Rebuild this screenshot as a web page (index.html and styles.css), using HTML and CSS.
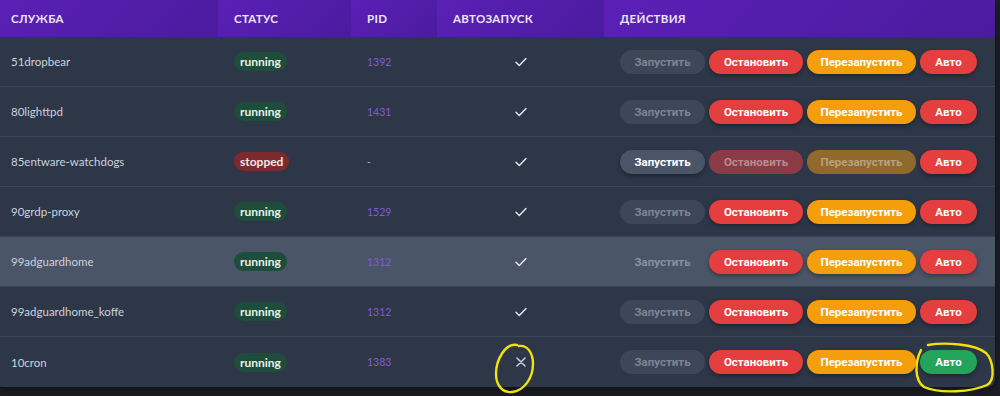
FILE: index.html
```html
<!DOCTYPE html>
<html lang="ru">
<head>
<meta charset="utf-8">
<title>Службы</title>
<link rel="stylesheet" href="styles.css">
</head>
<body>
<div class="wrap">
  <table class="services">
    <colgroup>
      <col class="c-name"><col class="c-status"><col class="c-pid"><col class="c-auto"><col class="c-act">
    </colgroup>
    <thead>
      <tr><th>Служба</th><th>Статус</th><th>PID</th><th>Автозапуск</th><th>Действия</th></tr>
    </thead>
    <tbody>
      <tr>
        <td class="name">51dropbear</td>
        <td><span class="badge run">running</span></td>
        <td class="pid">1392</td>
        <td class="auto"><svg class="ico" width="12" height="10" viewBox="0 0 12 10"><path d="M1 5.2 L4.3 8.4 L11 1.4"/></svg></td>
        <td><div class="actions"><button class="btn start off">Запустить</button><button class="btn stop">Остановить</button><button class="btn restart">Перезапустить</button><button class="btn autob red">Авто</button></div></td>
      </tr>
      <tr>
        <td class="name">80lighttpd</td>
        <td><span class="badge run">running</span></td>
        <td class="pid">1431</td>
        <td class="auto"><svg class="ico" width="12" height="10" viewBox="0 0 12 10"><path d="M1 5.2 L4.3 8.4 L11 1.4"/></svg></td>
        <td><div class="actions"><button class="btn start off">Запустить</button><button class="btn stop">Остановить</button><button class="btn restart">Перезапустить</button><button class="btn autob red">Авто</button></div></td>
      </tr>
      <tr>
        <td class="name">85entware-watchdogs</td>
        <td><span class="badge stop">stopped</span></td>
        <td class="pid dash">-</td>
        <td class="auto"><svg class="ico" width="12" height="10" viewBox="0 0 12 10"><path d="M1 5.2 L4.3 8.4 L11 1.4"/></svg></td>
        <td><div class="actions"><button class="btn start">Запустить</button><button class="btn stop off">Остановить</button><button class="btn restart off">Перезапустить</button><button class="btn autob red">Авто</button></div></td>
      </tr>
      <tr>
        <td class="name">90grdp-proxy</td>
        <td><span class="badge run">running</span></td>
        <td class="pid">1529</td>
        <td class="auto"><svg class="ico" width="12" height="10" viewBox="0 0 12 10"><path d="M1 5.2 L4.3 8.4 L11 1.4"/></svg></td>
        <td><div class="actions"><button class="btn start off">Запустить</button><button class="btn stop">Остановить</button><button class="btn restart">Перезапустить</button><button class="btn autob red">Авто</button></div></td>
      </tr>
      <tr class="hover">
        <td class="name">99adguardhome</td>
        <td><span class="badge run">running</span></td>
        <td class="pid">1312</td>
        <td class="auto"><svg class="ico" width="12" height="10" viewBox="0 0 12 10"><path d="M1 5.2 L4.3 8.4 L11 1.4"/></svg></td>
        <td><div class="actions"><button class="btn start off">Запустить</button><button class="btn stop">Остановить</button><button class="btn restart">Перезапустить</button><button class="btn autob red">Авто</button></div></td>
      </tr>
      <tr>
        <td class="name">99adguardhome_koffe</td>
        <td><span class="badge run">running</span></td>
        <td class="pid">1312</td>
        <td class="auto"><svg class="ico" width="12" height="10" viewBox="0 0 12 10"><path d="M1 5.2 L4.3 8.4 L11 1.4"/></svg></td>
        <td><div class="actions"><button class="btn start off">Запустить</button><button class="btn stop">Остановить</button><button class="btn restart">Перезапустить</button><button class="btn autob red">Авто</button></div></td>
      </tr>
      <tr>
        <td class="name">10cron</td>
        <td><span class="badge run">running</span></td>
        <td class="pid">1383</td>
        <td class="auto"><svg class="ico cross" width="10" height="10" viewBox="0 0 10 10"><path d="M1 1 L9 9 M9 1 L1 9"/></svg></td>
        <td><div class="actions"><button class="btn start off">Запустить</button><button class="btn stop">Остановить</button><button class="btn restart">Перезапустить</button><button class="btn autob green">Авто</button></div></td>
      </tr>
    </tbody>
  </table>
  <svg class="marks" width="1000" height="396" viewBox="0 0 1000 396">
    <path d="M517 345 C505 343 496 360 496 374 C496 386 503 393 512 392 C524 391 533 378 533 364 C533 352 527 345 519 346" />
    <path d="M921 350 C915 362 914 380 924 387 C940 394 972 392 987 385 C996 380 993 360 986 353 C975 344 945 342 928 345" />
  </svg>
</div>
</body>
</html>
```

FILE: styles.css
```css
* { box-sizing: border-box; }
html, body { margin: 0; padding: 0; }
body {
  background: #1b1e25;
  font-family: Lato, "Open Sans", sans-serif;
  width: 1000px;
  height: 396px;
  overflow: hidden;
}
.wrap {
  position: relative;
  width: 1000px;
  height: 396px;
}
.services {
  margin-left: -5px;
  width: 1000px;
  border-collapse: separate;
  border-spacing: 0;
  table-layout: fixed;
  background: #2d3748;
  border-radius: 0 0 8px 8px;
  overflow: hidden;
  box-shadow: 0 3px 8px rgba(0,0,0,0.45);
}
.c-name { width: 223px; }
.c-status { width: 133px; }
.c-pid { width: 86px; }
.c-auto { width: 167px; }
.c-act { width: auto; }

th {
  height: 37px;
  padding: 0 16px;
  text-align: left;
  font-size: 11.5px;
  font-weight: 700;
  letter-spacing: 0.3px;
  text-transform: uppercase;
  color: #ece4f8;
  background: linear-gradient(135deg, #5a20b6 0%, #4b1b9e 100%);
}

td {
  height: 50px;
  padding: 0 16px;
  border-bottom: 1px solid #3b4556;
  font-size: 11.5px;
  color: #cdd5df;
  vertical-align: middle;
}
tbody tr:last-child td { border-bottom: none; }
tr.hover td { background: #4a5568; border-bottom-color: #3a4252; }

.name { color: #cbd3de; }
.pid { color: #825ad8; font-size: 10.5px; }
.pid.dash { color: #aab3c0; }
.auto { text-align: center; padding: 0; line-height: 0; }
.ico { display: inline-block; vertical-align: middle; }
.ico path {
  fill: none;
  stroke: #e6ebf1;
  stroke-width: 1.4;
  stroke-linecap: round;
  stroke-linejoin: round;
}
.ico.cross path { stroke: #c9d0da; stroke-width: 1.5; }

.badge {
  display: inline-block;
  height: 19px;
  line-height: 19px;
  padding: 0 6px;
  border-radius: 10px;
  font-size: 12px;
  font-weight: 700;
  color: #e6f2ea;
}
.badge.run { background: #1f4d3b; }
.badge.stop { background: #7d2a2f; color: #f4e6e6; }

.actions {
  display: flex;
  gap: 4px;
  align-items: center;
}
.btn {
  height: 24px;
  border: none;
  border-radius: 12px;
  padding: 0;
  font-family: Roboto, "Liberation Sans", sans-serif;
  font-size: 11.5px;
  font-weight: 700;
  color: #ffffff;
  box-shadow: 0 2px 4px rgba(0,0,0,0.35);
  cursor: pointer;
}
.btn.start { width: 85px; background: #4a5568; }
.btn.start.off { background: #3d4758; color: #7c8594; box-shadow: none; }
tr.hover .btn.start.off { background: #4a5568; color: #8891a0; }
.btn.stop { width: 94px; background: #e53e3e; }
.btn.stop.off { background: #8b3b46; color: #b98a90; box-shadow: none; }
.btn.restart { width: 109px; background: #f59e0b; }
.btn.restart.off { background: #906a2c; color: #b9a07c; box-shadow: none; }
.btn.autob { width: 57px; }
.btn.red { background: #e53e3e; }
.btn.green { background: #22a55b; }

.marks {
  position: absolute;
  left: 0;
  top: 0;
  pointer-events: none;
}
.marks path {
  fill: none;
  stroke: #f2e20a;
  stroke-width: 2.4;
  stroke-linecap: round;
}
```
